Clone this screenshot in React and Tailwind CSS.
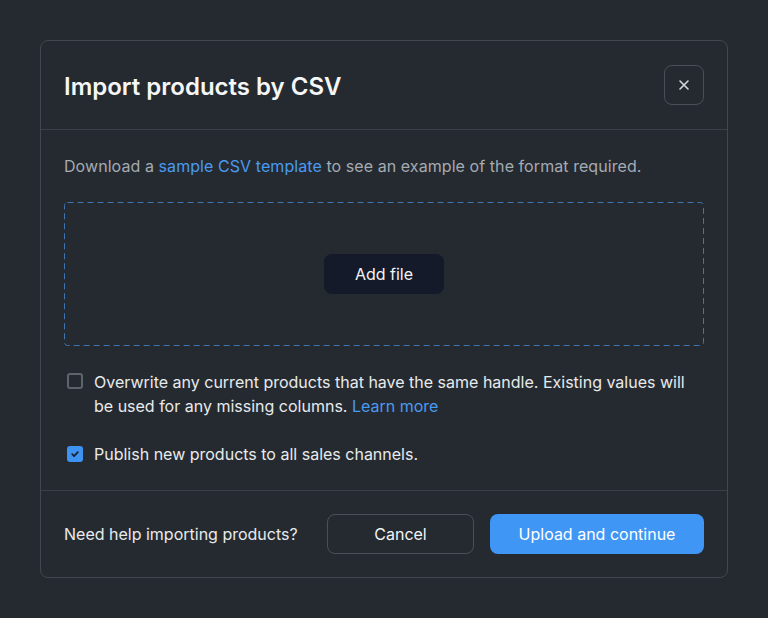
import React from "react";

export default function App() {
  return (
    <div
      className="w-[768px] h-[618px] bg-[#252a30] pt-10 px-10 text-[#f3f4f6]"
      style={{ fontFamily: "Inter, 'Noto Sans', sans-serif" }}
    >
      <div className="w-[688px] h-[538px] rounded-lg border border-[#41474f] bg-[#252a30] flex flex-col">
        {/* Header */}
        <div className="h-[89px] flex items-center justify-between pl-[23px] pr-[23px] border-b border-[#3a4047]">
          <h1 className="pt-[3px] text-[24px] font-semibold leading-8 text-[#f5f6f7]">
            Import products by CSV
          </h1>
          <button className="w-10 h-10 rounded-lg border border-[#4a5059] flex items-center justify-center text-[#d6d9dd]">
            <svg width="16" height="16" viewBox="0 0 16 16" fill="none" stroke="currentColor" strokeWidth="1.6" strokeLinecap="round">
              <path d="M4 4l8 8M12 4l-8 8" />
            </svg>
          </button>
        </div>

        {/* Body */}
        <div className="flex flex-col px-[23px] pt-6 pb-6 border-b border-[#3a4047]">
          <p className="text-[16px] leading-6 text-[#a4abb3] tracking-[0.07px]">
            Download a <span className="text-[#4a9af0]">sample CSV template</span> to see an example of the format required.
          </p>
          <div className="relative mt-6 h-[144px] flex items-center justify-center">
            <svg className="absolute inset-0" width="640" height="144" viewBox="0 0 640 144" fill="none">
              <rect x="0.5" y="0.5" width="639" height="143" rx="3" stroke="#3f76b2" strokeWidth="1" strokeDasharray="6 4" />
            </svg>
            <button className="relative w-[120px] h-10 rounded-lg bg-[#141a29] text-[16px] font-normal text-[#f3f4f6]">
              Add file
            </button>
          </div>
          <div className="mt-6 flex items-start gap-[11px]">
            <span className="mt-[3px] ml-[3px] w-4 h-4 shrink-0 rounded-[3px] border-2 border-[#5e646c]" />
            <p className="text-[16px] leading-6 text-[#e8eaed]">
              Overwrite any current products that have the same handle. Existing values will be used for any missing columns.{" "}
              <span className="text-[#4a9af0]">Learn more</span>
            </p>
          </div>
          <div className="mt-6 flex items-start gap-[11px]">
            <span className="mt-1 ml-[3px] w-4 h-4 shrink-0 rounded-[3px] bg-[#3e93f2] flex items-center justify-center">
              <svg width="10" height="10" viewBox="0 0 10 10" fill="none" stroke="#1b2330" strokeWidth="1.8" strokeLinecap="round" strokeLinejoin="round">
                <path d="M2.2 5.2l1.9 1.9 3.7-4" />
              </svg>
            </span>
            <p className="text-[16px] leading-6 text-[#e8eaed]">Publish new products to all sales channels.</p>
          </div>
        </div>

        {/* Footer */}
        <div className="flex-1 flex items-center px-[23px]">
          <p className="text-[16px] leading-6 text-[#e8eaed]">Need help importing products?</p>
          <div className="ml-auto flex items-center gap-4">
            <button className="w-[147px] h-10 rounded-lg border border-[#4a5059] text-[16px] font-normal text-[#f3f4f6]">
              Cancel
            </button>
            <button className="w-[214px] h-10 rounded-lg bg-[#4096f5] text-[16px] font-normal text-white">
              Upload and continue
            </button>
          </div>
        </div>
      </div>
    </div>
  );
}
